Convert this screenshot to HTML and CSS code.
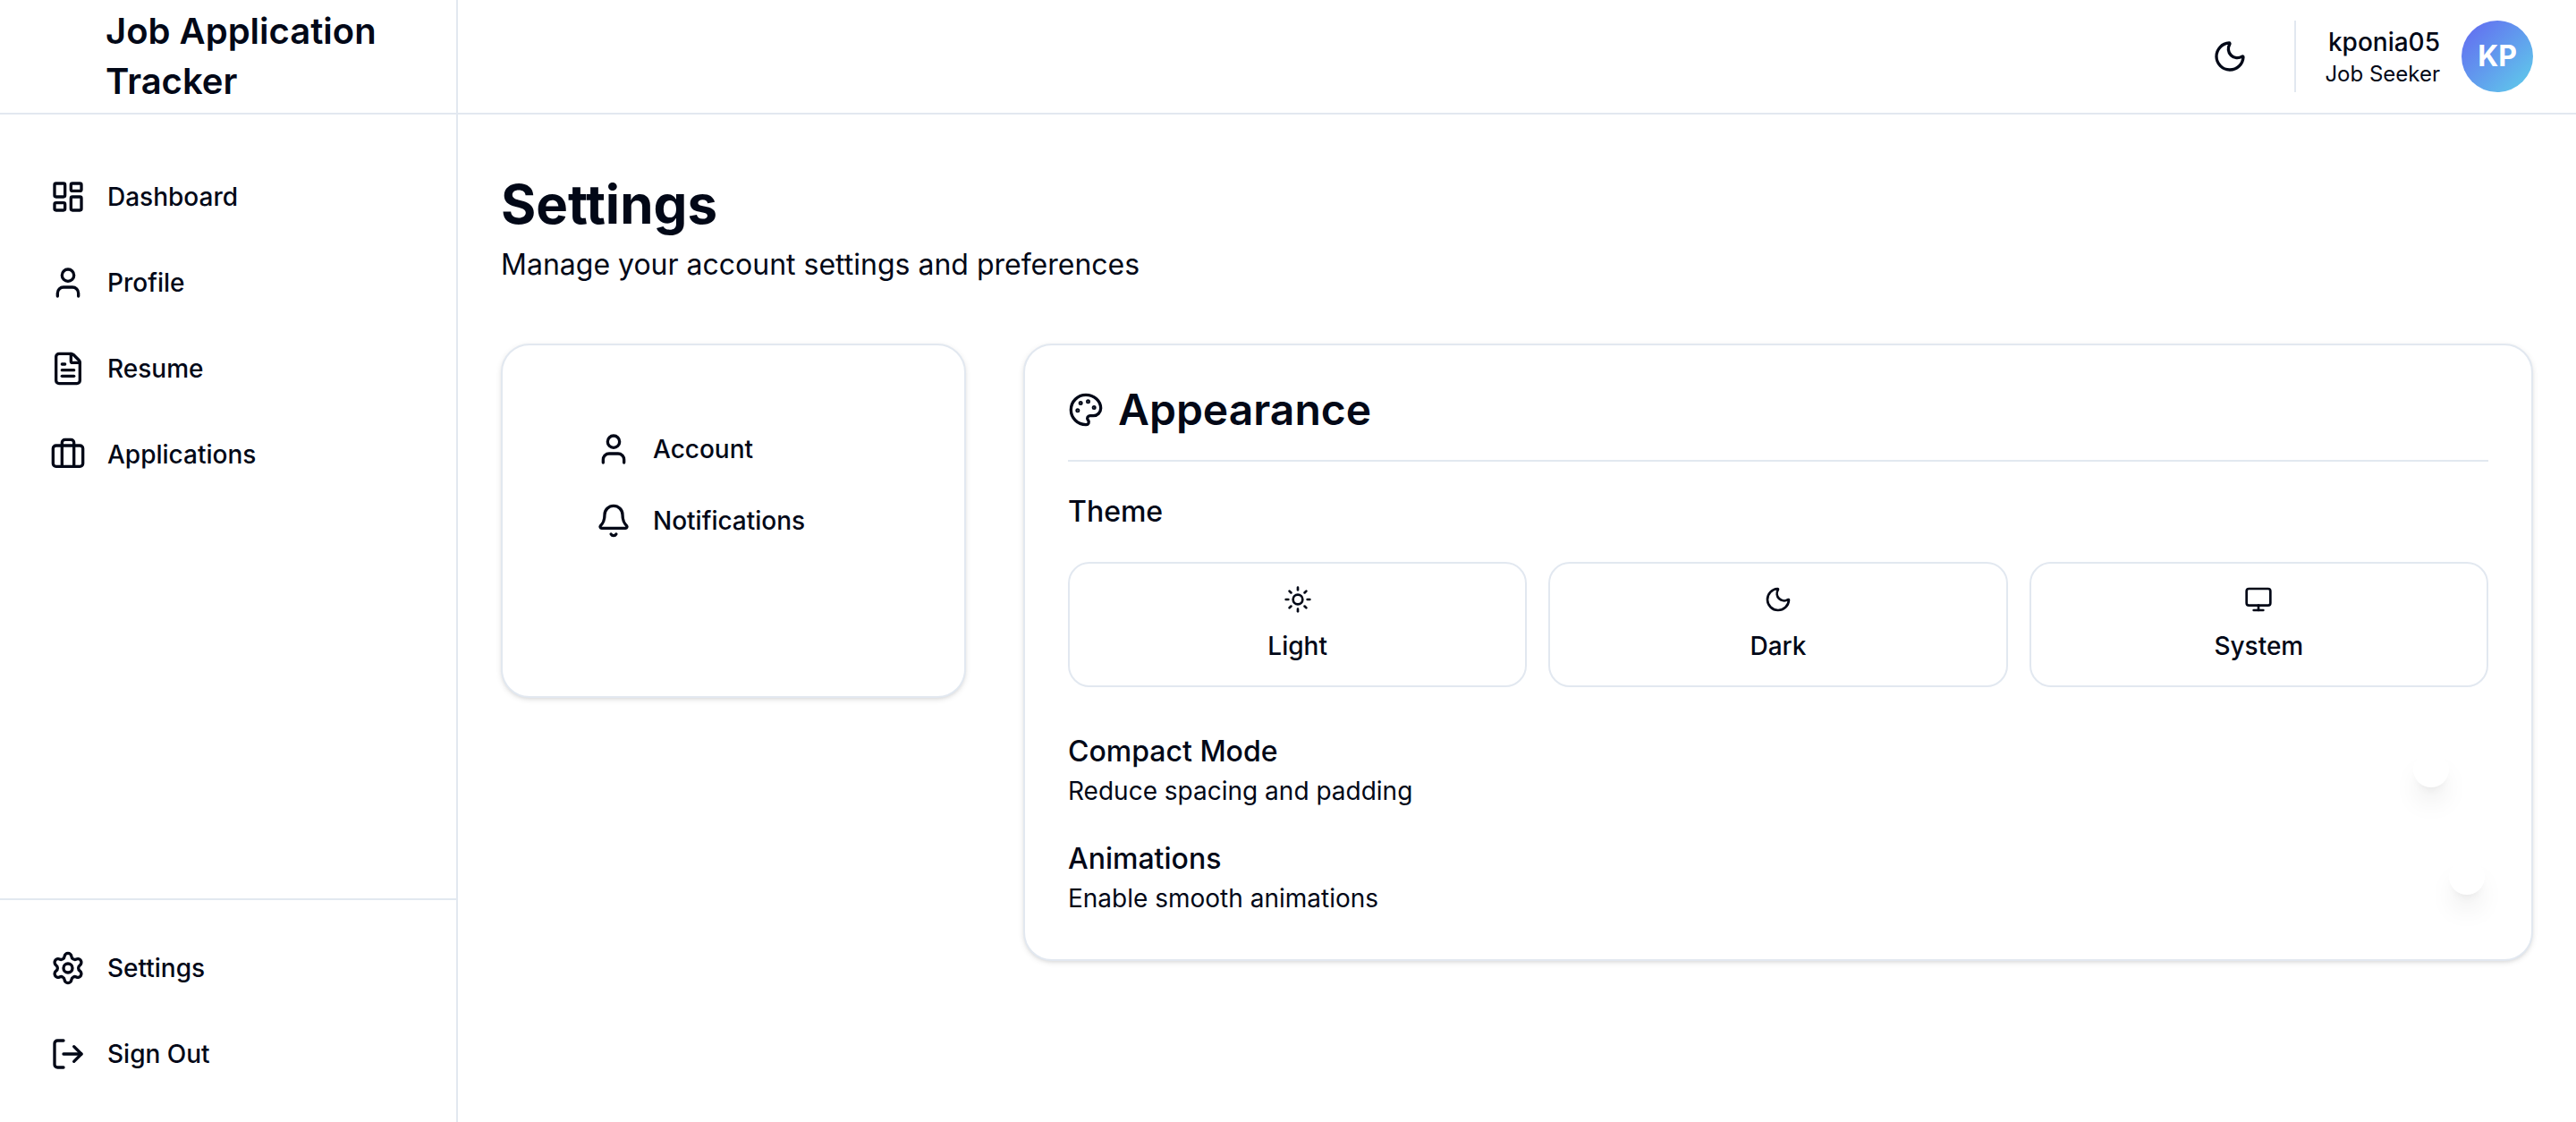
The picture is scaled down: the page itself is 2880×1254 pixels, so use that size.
FILE: index.html
```html
<!DOCTYPE html>
<html lang="en">
<head>
  <meta charset="utf-8">
  <meta name="viewport" content="width=device-width, initial-scale=1">
  <title>Settings</title>
  <link rel="stylesheet" href="styles.css">
</head>
<body>
  <div class="app">
    <aside class="sidebar">
      <div class="brand"><span class="brand-name">Job Application Tracker</span></div>
      <nav class="nav nav-main" aria-label="Main">
        <a class="nav-link" href="#dashboard">
          <svg class="icon" viewBox="0 0 24 24"><rect width="7" height="9" x="3" y="3" rx="1"/><rect width="7" height="5" x="14" y="3" rx="1"/><rect width="7" height="9" x="14" y="12" rx="1"/><rect width="7" height="5" x="3" y="16" rx="1"/></svg>
          Dashboard
        </a>
        <a class="nav-link" href="#profile">
          <svg class="icon" viewBox="0 0 24 24"><path d="M19 21v-2a4 4 0 0 0-4-4H9a4 4 0 0 0-4 4v2"/><circle cx="12" cy="7" r="4"/></svg>
          Profile
        </a>
        <a class="nav-link" href="#resume">
          <svg class="icon" viewBox="0 0 24 24"><path d="M6 22a2 2 0 0 1-2-2V4a2 2 0 0 1 2-2h8a2.4 2.4 0 0 1 1.704.706l3.588 3.588A2.4 2.4 0 0 1 20 8v12a2 2 0 0 1-2 2z"/><path d="M14 2v5a1 1 0 0 0 1 1h5"/><path d="M10 9H8"/><path d="M16 13H8"/><path d="M16 17H8"/></svg>
          Resume
        </a>
        <a class="nav-link" href="#applications">
          <svg class="icon" viewBox="0 0 24 24"><path d="M16 20V4a2 2 0 0 0-2-2h-4a2 2 0 0 0-2 2v16"/><rect width="20" height="14" x="2" y="6" rx="2"/></svg>
          Applications
        </a>
      </nav>
      <nav class="nav nav-footer" aria-label="Session">
        <a class="nav-link" href="#settings">
          <svg class="icon" viewBox="0 0 24 24"><path d="M9.671 4.136a2.34 2.34 0 0 1 4.659 0 2.34 2.34 0 0 0 3.319 1.915 2.34 2.34 0 0 1 2.33 4.033 2.34 2.34 0 0 0 0 3.831 2.34 2.34 0 0 1-2.33 4.033 2.34 2.34 0 0 0-3.319 1.915 2.34 2.34 0 0 1-4.659 0 2.34 2.34 0 0 0-3.32-1.915 2.34 2.34 0 0 1-2.33-4.033 2.34 2.34 0 0 0 0-3.831A2.34 2.34 0 0 1 6.35 6.051a2.34 2.34 0 0 0 3.319-1.915"/><circle cx="12" cy="12" r="3"/></svg>
          Settings
        </a>
        <button class="nav-link" type="button">
          <svg class="icon" viewBox="0 0 24 24"><path d="m16 17 5-5-5-5"/><path d="M21 12H9"/><path d="M9 21H5a2 2 0 0 1-2-2V5a2 2 0 0 1 2-2h4"/></svg>
          Sign Out
        </button>
      </nav>
    </aside>

    <div class="page">
      <header class="topbar">
        <button class="theme-toggle" type="button" aria-label="Toggle theme">
          <svg class="icon" viewBox="0 0 24 24"><path d="M20.985 12.486a9 9 0 1 1-9.473-9.472c.405-.022.617.46.402.803a6 6 0 0 0 8.268 8.268c.344-.215.825-.004.803.401"/></svg>
        </button>
        <div class="user">
          <div class="user-text">
            <span class="user-name">kponia05</span>
            <span class="user-role">Job Seeker</span>
          </div>
          <div class="avatar">KP</div>
        </div>
      </header>

      <main class="content">
        <div class="page-head">
          <h1 class="page-title">Settings</h1>
          <p class="page-subtitle">Manage your account settings and preferences</p>
        </div>

        <div class="settings-grid">
          <nav class="card sections" aria-label="Settings sections">
            <button class="section-link" type="button">
              <svg class="icon" viewBox="0 0 24 24"><path d="M19 21v-2a4 4 0 0 0-4-4H9a4 4 0 0 0-4 4v2"/><circle cx="12" cy="7" r="4"/></svg>
              Account
            </button>
            <button class="section-link" type="button">
              <svg class="icon" viewBox="0 0 24 24"><path d="M10.268 21a2 2 0 0 0 3.464 0"/><path d="M3.262 15.326A1 1 0 0 0 4 17h16a1 1 0 0 0 .74-1.673C19.41 13.956 18 12.499 18 8A6 6 0 0 0 6 8c0 4.499-1.411 5.956-2.738 7.326"/></svg>
              Notifications
            </button>
          </nav>

          <section class="card panel">
            <div class="panel-head">
              <svg class="icon" viewBox="0 0 24 24"><path d="M12 22a1 1 0 0 1 0-20 10 9 0 0 1 10 9 5 5 0 0 1-5 5h-2.25a1.75 1.75 0 0 0-1.4 2.8l.3.4a1.75 1.75 0 0 1-1.4 2.8z"/><circle class="dot" cx="13.5" cy="6.5" r=".5"/><circle class="dot" cx="17.5" cy="10.5" r=".5"/><circle class="dot" cx="6.5" cy="12.5" r=".5"/><circle class="dot" cx="8.5" cy="7.5" r=".5"/></svg>
              <h2 class="panel-title">Appearance</h2>
            </div>

            <h3 class="setting-title theme-title">Theme</h3>
            <div class="themes">
              <button class="theme-option" type="button">
                <svg class="icon icon-small" viewBox="0 0 24 24"><circle cx="12" cy="12" r="4"/><path d="M12 2v2"/><path d="M12 20v2"/><path d="m4.93 4.93 1.41 1.41"/><path d="m17.66 17.66 1.41 1.41"/><path d="M2 12h2"/><path d="M20 12h2"/><path d="m6.34 17.66-1.41 1.41"/><path d="m19.07 4.93-1.41 1.41"/></svg>
                Light
              </button>
              <button class="theme-option" type="button">
                <svg class="icon icon-small" viewBox="0 0 24 24"><path d="M20.985 12.486a9 9 0 1 1-9.473-9.472c.405-.022.617.46.402.803a6 6 0 0 0 8.268 8.268c.344-.215.825-.004.803.401"/></svg>
                Dark
              </button>
              <button class="theme-option" type="button">
                <svg class="icon icon-small" viewBox="0 0 24 24"><rect width="20" height="14" x="2" y="3" rx="2"/><path d="M8 21h8"/><path d="M12 17v4"/></svg>
                System
              </button>
            </div>

            <div class="toggles">
              <div class="toggle-row">
                <label class="toggle-text" for="compact">
                  <span class="setting-title">Compact Mode</span>
                  <span class="setting-hint">Reduce spacing and padding</span>
                </label>
                <input class="switch" type="checkbox" id="compact">
              </div>
              <div class="toggle-row">
                <label class="toggle-text" for="animations">
                  <span class="setting-title">Animations</span>
                  <span class="setting-hint">Enable smooth animations</span>
                </label>
                <input class="switch" type="checkbox" id="animations" checked>
              </div>
            </div>
          </section>
        </div>
      </main>
    </div>
  </div>
</body>
</html>
```

FILE: styles.css
```css
:root {
  --text: #020817;
  --border: #e2e8f0;
}

*,
*::before {
  box-sizing: border-box;
}

body,
h1,
h2,
h3,
p {
  margin: 0;
}

body {
  background: #fff;
  color: var(--text);
  font: 400 28px/40px Inter, "Liberation Sans", sans-serif;
}

button {
  border: 0;
  padding: 0;
  background: none;
  color: inherit;
  font: inherit;
  cursor: pointer;
}

a {
  color: inherit;
  text-decoration: none;
}

.icon {
  flex: none;
  width: 40px;
  height: 40px;
  fill: none;
  stroke: currentColor;
  stroke-width: 2;
  stroke-linecap: round;
  stroke-linejoin: round;
}

.icon-small {
  width: 32px;
  height: 32px;
}

.dot {
  fill: currentColor;
}

.app {
  display: flex;
  min-height: 100vh;
}

/* Sidebar */

.sidebar {
  display: flex;
  flex: none;
  flex-direction: column;
  width: 512px;
  border-right: 2px solid var(--border);
}

.brand {
  display: flex;
  align-items: center;
  height: 128px;
  padding: 0 48px 0 118px;
  border-bottom: 2px solid var(--border);
}

.brand-name {
  font-size: 40px;
  font-weight: 600;
  line-height: 56px;
}

.nav {
  display: flex;
  flex-direction: column;
  gap: 8px;
  padding: 32px;
}

.nav-main {
  flex: 1;
  padding-top: 48px;
}

.nav-footer {
  border-top: 2px solid var(--border);
}

.nav-link {
  display: flex;
  align-items: center;
  gap: 24px;
  padding: 24px;
  border-radius: 16px;
  font-weight: 500;
}

/* Top bar */

.page {
  flex: 1;
  min-width: 0;
}

.topbar {
  display: flex;
  align-items: center;
  justify-content: flex-end;
  gap: 32px;
  height: 128px;
  padding: 0 48px;
  border-bottom: 2px solid var(--border);
}

.theme-toggle {
  display: flex;
  align-items: center;
  justify-content: center;
  width: 80px;
  height: 80px;
  border-radius: 16px;
}

.user {
  display: flex;
  align-items: center;
  gap: 24px;
  padding-left: 32px;
  border-left: 2px solid var(--border);
}

.user-text {
  display: flex;
  flex-direction: column;
  text-align: right;
}

.user-name {
  font-weight: 500;
}

.user-role {
  font-size: 24px;
  line-height: 32px;
}

.avatar {
  display: flex;
  align-items: center;
  justify-content: center;
  width: 80px;
  height: 80px;
  border-radius: 50%;
  background: linear-gradient(135deg, #6366f1, #5fd0ea);
  color: #fff;
  font-size: 32px;
  font-weight: 700;
}

/* Content */

.content {
  padding: 64px 48px;
}

.page-head {
  margin-bottom: 64px;
}

.page-title {
  font-size: 60px;
  font-weight: 700;
  line-height: 72px;
}

.page-subtitle {
  margin-top: 8px;
  font-size: 32px;
  line-height: 48px;
}

.settings-grid {
  display: grid;
  grid-template-columns: repeat(4, 1fr);
  gap: 64px;
  align-items: start;
}

.card {
  border: 2px solid var(--border);
  border-radius: 32px;
  background: #fff;
  box-shadow: 0 2px 6px rgba(0, 0, 0, 0.1), 0 2px 4px -2px rgba(0, 0, 0, 0.1);
}

.sections {
  display: flex;
  flex-direction: column;
  padding: 76px 80px 156px;
}

.section-link {
  display: flex;
  align-items: center;
  gap: 24px;
  padding: 20px 24px;
  font-weight: 500;
}

.panel {
  grid-column: span 3;
  padding: 48px;
}

.panel-head {
  display: flex;
  align-items: center;
  gap: 16px;
  padding-bottom: 32px;
  border-bottom: 2px solid var(--border);
}

.panel-title {
  font-size: 48px;
  font-weight: 600;
  line-height: 48px;
}

.setting-title {
  font-size: 32px;
  font-weight: 500;
  line-height: 48px;
}

.theme-title {
  margin: 32px 0;
}

.themes {
  display: grid;
  grid-template-columns: repeat(3, 1fr);
  gap: 24px;
}

.theme-option {
  display: flex;
  flex-direction: column;
  align-items: center;
  gap: 16px;
  padding: 24px;
  border: 2px solid var(--border);
  border-radius: 24px;
  font-weight: 500;
}

.toggles {
  display: flex;
  flex-direction: column;
  gap: 32px;
  margin-top: 48px;
}

.toggle-row {
  display: flex;
  align-items: center;
  justify-content: space-between;
}

.toggle-text {
  display: flex;
  flex-direction: column;
}

.switch {
  display: flex;
  align-items: center;
  appearance: none;
  width: 88px;
  height: 48px;
  margin: 0;
  padding: 4px;
  border-radius: 24px;
  cursor: pointer;
}

.switch::before {
  content: "";
  width: 40px;
  height: 40px;
  border-radius: 50%;
  background: #fff;
  box-shadow: 0 20px 30px -6px rgba(0, 0, 0, 0.1), 0 8px 12px -8px rgba(0, 0, 0, 0.1);
}

.switch:checked {
  justify-content: flex-end;
}
```
